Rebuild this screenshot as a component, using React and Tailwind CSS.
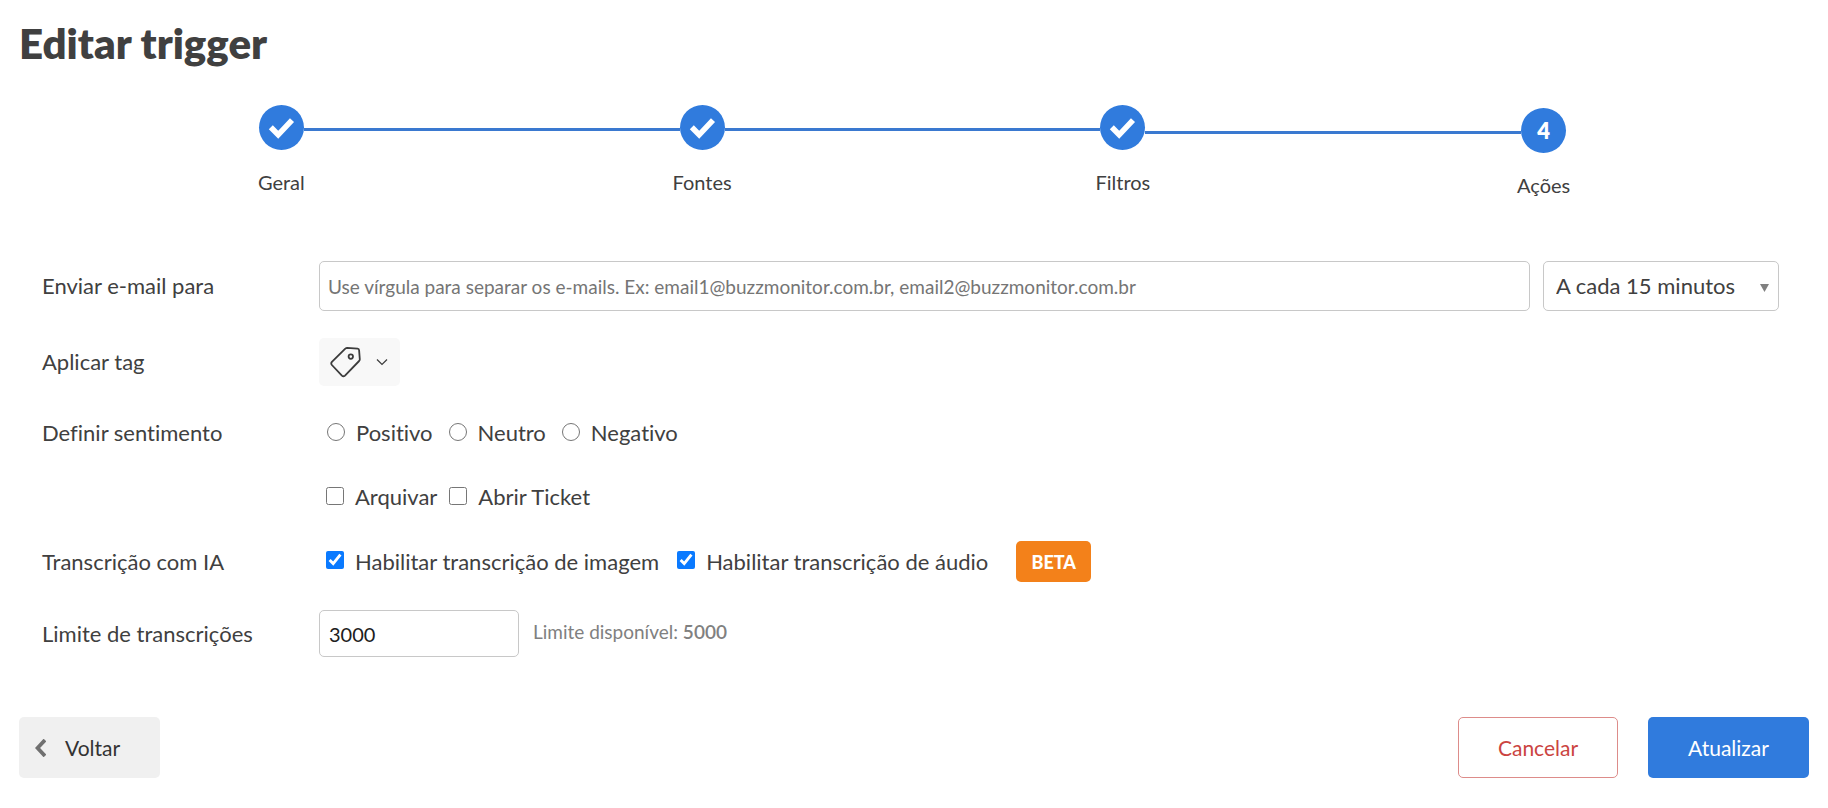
import React, { useState } from "react";

const steps = [
  { label: "Geral", done: true },
  { label: "Fontes", done: true },
  { label: "Filtros", done: true },
  { label: "Ações", done: false },
];

const CheckIcon = () => (
  <svg viewBox="0 0 45 45" className="w-full h-full" fill="none">
    <path
      d="M11.8 22.2L19.2 29.8L33 15.2"
      stroke="white"
      strokeWidth="5.6"
    />
  </svg>
);

const TagIcon = () => (
  <svg
    width="32"
    height="32"
    viewBox="0 0 32 32"
    fill="none"
    stroke="#3c3c3c"
    strokeWidth="1.8"
    strokeLinejoin="round"
  >
    <path d="M17.2 1.8L27.6 2.6Q29 2.7 29.1 4.2L29.8 13.2Q29.8 14.2 29.1 15L15 29.6Q13.4 31 11.9 29.6L1.9 19Q0.6 17.4 1.9 15.9L15.3 2.6Q16.2 1.8 17.2 1.8Z" />
    <circle cx="20.8" cy="10.6" r="2.2" />
  </svg>
);

const Stepper = () => (
  <ol className="grid grid-cols-4 ml-[71px] mr-[74px]">
    {steps.map((step, index) => {
      const isLast = index === steps.length - 1;
      const beforeLast = index === steps.length - 2;

      return (
        <li key={step.label} className={isLast ? "pt-[3px]" : ""}>
          <div className="flex items-center">
            <span
              className={`flex-1 h-[3px] mt-1 ${index === 0 ? "" : "bg-[#3a79d0]"}`}
            />
            <span className="w-[45px] h-[45px] rounded-full bg-[#307bdd] text-white text-[22px] font-extrabold flex items-center justify-center">
              {step.done ? <CheckIcon /> : index + 1}
            </span>
            <span
              className={`flex-1 h-[3px] ${beforeLast ? "mt-[10px]" : "mt-1"} ${isLast ? "" : "bg-[#3a79d0]"}`}
            />
          </div>
          <p className="text-center text-[20px] leading-6 mt-5">
            {step.label}
          </p>
        </li>
      );
    })}
  </ol>
);

const Row = ({ label, htmlFor, className, children }) => (
  <div className={`flex items-center ${className}`}>
    <div className="w-[277px] shrink-0">
      {htmlFor ? <label htmlFor={htmlFor}>{label}</label> : label}
    </div>
    {children}
  </div>
);

const Check = ({ label, ...props }) => (
  <label className="flex items-center gap-[11px]">
    <input
      type="checkbox"
      className="w-[18px] h-[18px] mb-[3px] accent-[#0a7aff]"
      {...props}
    />
    {label}
  </label>
);

const App = () => {
  const [sentiment, setSentiment] = useState("");

  return (
    <div className="bg-white text-[#404040] font-[Lato,sans-serif] [font-variant-ligatures:none] text-[22px] leading-[26px] px-[19px] pt-[17px] pb-[30px]">
      <h1 className="text-[42px] leading-[52px] font-extrabold mb-9">
        Editar trigger
      </h1>

      <div className="-mx-[19px]">
        <Stepper />
      </div>

      <form
        className="mt-16"
        onSubmit={(e) => e.preventDefault()}
      >
        <div className="pl-[23px] pr-[30px]">
          <Row label="Enviar e-mail para" htmlFor="emails" className="h-[50px]">
            <input
              id="emails"
              type="text"
              placeholder="Use vírgula para separar os e-mails. Ex: email1@buzzmonitor.com.br, email2@buzzmonitor.com.br"
              className="flex-1 min-w-0 h-[50px] border border-[#c8c8c8] rounded-[5px] px-2 text-[19px] placeholder:text-[#757575]"
            />
            <div className="relative ml-[13px] w-[236px]">
              <select
                aria-label="Frequência"
                className="appearance-none w-full h-[50px] border border-[#c8c8c8] rounded-[5px] pl-3 bg-white text-[22px]"
              >
                <option>A cada 15 minutos</option>
              </select>
              <svg
                className="absolute right-[10px] top-[23px] pointer-events-none"
                width="9"
                height="8"
                viewBox="0 0 9 8"
              >
                <path d="M0 0H9L4.5 8Z" fill="#808080" />
              </svg>
            </div>
          </Row>

          {/* Tag */}
          <Row label="Aplicar tag" className="mt-[27px] h-[48px]">
            <button
              type="button"
              aria-label="Aplicar tag"
              className="w-[81px] h-[48px] bg-[#f8f8f8] rounded-[5px] flex items-center gap-[14px] pl-[11px]"
            >
              <TagIcon />
              <svg width="12" height="8" viewBox="0 0 12 8" fill="none">
                <path d="M1 1.5L6 6.5L11 1.5" stroke="#3c3c3c" strokeWidth="1.2" />
              </svg>
            </button>
          </Row>

          {/* Sentiment */}
          <Row label="Definir sentimento" className="mt-[34px]">
            <div className="flex gap-4 pl-2">
              {["Positivo", "Neutro", "Negativo"].map((name) => (
                <label key={name} className="flex items-center gap-[11px]">
                  <input
                    type="radio"
                    name="sentiment"
                    className="w-[18px] h-[18px] mb-[3px]"
                    checked={sentiment === name}
                    onChange={() => setSentiment(name)}
                  />
                  {name}
                </label>
              ))}
            </div>
          </Row>

          <Row label="" className="mt-[38px]">
            <div className="flex gap-3 pl-[7px]">
              <Check label="Arquivar" />
              <Check label="Abrir Ticket" />
            </div>
          </Row>

          {/* Transcription */}
          <Row label="Transcrição com IA" className="mt-[31px]">
            <div className="flex items-center gap-[18px] pl-[7px]">
              <Check label="Habilitar transcrição de imagem" defaultChecked />
              <Check label="Habilitar transcrição de áudio" defaultChecked />
            </div>
            <span className="ml-7 w-[75px] h-[41px] rounded-[5px] bg-[#f3811a] text-white text-[18px] font-black flex items-center justify-center">
              BETA
            </span>
          </Row>

          <Row
            label="Limite de transcrições"
            htmlFor="limit"
            className="mt-[28px]"
          >
            <input
              id="limit"
              type="text"
              defaultValue="3000"
              className="w-[200px] h-[47px] border border-[#c8c8c8] rounded-[5px] px-[9px] text-[20px] text-[#202020]"
            />
            <p className="ml-[14px] mb-1 text-[19px] text-[#808080]">
              Limite disponível: <span className="font-semibold">5000</span>
            </p>
          </Row>
        </div>

        {/* Footer */}
        <div className="flex mt-[60px] text-[21px]">
          <button
            type="button"
            className="w-[141px] h-[61px] rounded-[5px] bg-[#f0f0f0] text-[#333333] flex items-center gap-[19px] pl-4"
          >
            <svg width="11" height="18" viewBox="0 0 11 18" fill="none">
              <path d="M10 1L2.5 9L10 17" stroke="#707070" strokeWidth="3.8" />
            </svg>
            Voltar
          </button>
          <button
            type="button"
            className="ml-auto w-[160px] h-[61px] rounded-[5px] border border-[#dd8c8a] text-[#cb4441]"
          >
            Cancelar
          </button>
          <button
            type="submit"
            className="ml-[30px] w-[161px] h-[61px] rounded-[5px] bg-[#307bdd] text-white"
          >
            Atualizar
          </button>
        </div>
      </form>
    </div>
  );
};

export default App;
